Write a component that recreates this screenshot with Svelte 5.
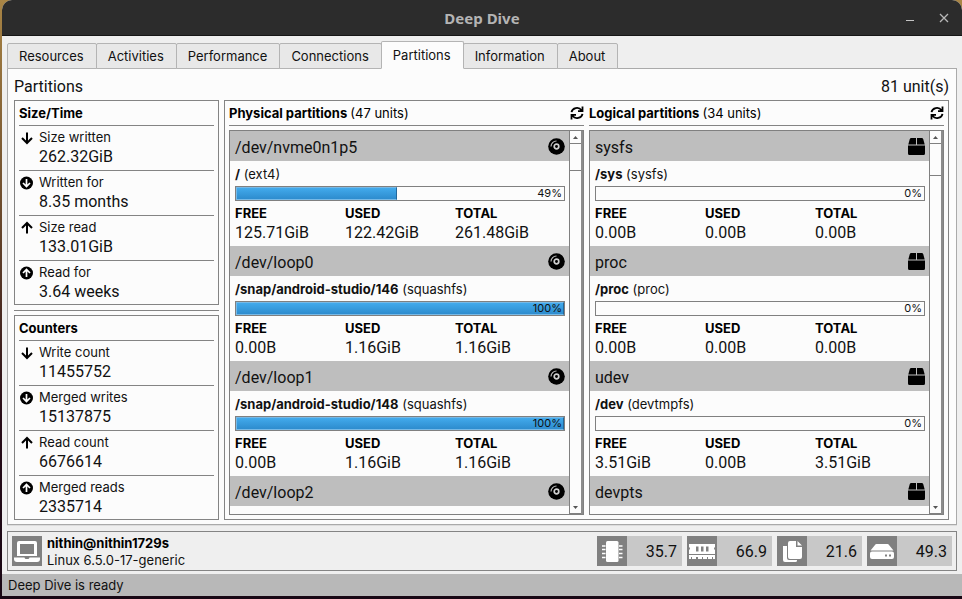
<script>
  const tabs = ['Resources', 'Activities', 'Performance', 'Connections', 'Partitions', 'Information', 'About'];
  let active = $state('Partitions');

  const groups = [
    {
      title: 'Size/Time',
      rows: [
        { icon: 'down', label: 'Size written', value: '262.32GiB' },
        { icon: 'downCircle', label: 'Written for', value: '8.35 months' },
        { icon: 'up', label: 'Size read', value: '133.01GiB' },
        { icon: 'upCircle', label: 'Read for', value: '3.64 weeks' }
      ]
    },
    {
      title: 'Counters',
      rows: [
        { icon: 'down', label: 'Write count', value: '11455752' },
        { icon: 'downCircle', label: 'Merged writes', value: '15137875' },
        { icon: 'up', label: 'Read count', value: '6676614' },
        { icon: 'upCircle', label: 'Merged reads', value: '2335714' }
      ]
    }
  ];

  const lists = [
    {
      title: 'Physical partitions',
      units: 47,
      kind: 'disc',
      thumb: 27,
      items: [
        { device: '/dev/nvme0n1p5', mount: '/', fs: 'ext4', percent: 49, free: '125.71GiB', used: '122.42GiB', total: '261.48GiB' },
        { device: '/dev/loop0', mount: '/snap/android-studio/146', fs: 'squashfs', percent: 100, free: '0.00B', used: '1.16GiB', total: '1.16GiB' },
        { device: '/dev/loop1', mount: '/snap/android-studio/148', fs: 'squashfs', percent: 100, free: '0.00B', used: '1.16GiB', total: '1.16GiB' },
        { device: '/dev/loop2' }
      ]
    },
    {
      title: 'Logical partitions',
      units: 34,
      kind: 'box',
      thumb: 32,
      items: [
        { device: 'sysfs', mount: '/sys', fs: 'sysfs', percent: 0, free: '0.00B', used: '0.00B', total: '0.00B' },
        { device: 'proc', mount: '/proc', fs: 'proc', percent: 0, free: '0.00B', used: '0.00B', total: '0.00B' },
        { device: 'udev', mount: '/dev', fs: 'devtmpfs', percent: 0, free: '3.51GiB', used: '0.00B', total: '3.51GiB' },
        { device: 'devpts' }
      ]
    }
  ];

  const meters = [
    { icon: 'chip', name: 'CPU', value: '35.7' },
    { icon: 'memory', name: 'Memory', value: '66.9' },
    { icon: 'pages', name: 'Swap', value: '21.6' },
    { icon: 'drive', name: 'Disk', value: '49.3' }
  ];

  let viewports = $state([]);
  const scroll = (index, amount) => viewports[index]?.scrollBy({ top: amount });
</script>

{#snippet rowIcon(name)}
  <svg class="row-icon" width="16" height="16" viewBox="0 0 16 16" aria-hidden="true">
    {#if name === 'down'}
      <path d="M8 2.5v10M3 8l5 5 5-5" fill="none" stroke="#000" stroke-width="2" />
    {:else if name === 'up'}
      <path d="M8 13.5v-10M3 8l5-5 5 5" fill="none" stroke="#000" stroke-width="2" />
    {:else}
      <circle cx="7.5" cy="8" r="6.5" />
      {#if name === 'downCircle'}
        <path d="M7.5 4v7M4 8l3.500 3.500L11 8" fill="none" stroke="#fff" stroke-width="1.700" />
      {:else}
        <path d="M7.5 12V5M4 8l3.500-3.500L11 8" fill="none" stroke="#fff" stroke-width="1.700" />
      {/if}
    {/if}
  </svg>
{/snippet}

{#snippet deviceIcon(kind)}
  <svg width="17" height="17" viewBox="0 0 17 17" aria-hidden="true">
    {#if kind === 'disc'}
      <circle cx="8.5" cy="8.5" r="8.3" />
      <circle cx="8.5" cy="8.5" r="2.3" fill="none" stroke="#d0d0d0" stroke-width="1.700" />
      <path d="M3 8.500A5.500 5.500 0 0 1 8.500 3" fill="none" stroke="#bebebe" stroke-width="1.200" />
    {:else}
      <path d="M3.200 0H8v6.500H0.300L1.800 1Q2.200 0 3.200 0zM9 0h4.800q1 0 1.400 1l1.500 5.500H9zM0 7.500h17v8q0 1.500-1.500 1.500h-14Q0 17 0 15.500z" />
    {/if}
  </svg>
{/snippet}

{#snippet tileIcon(name)}
  <svg width="30" height="30" viewBox="0 0 30 30" fill="#fff" aria-hidden="true">
    {#if name === 'laptop'}
      <path fill-rule="evenodd" d="M7 5h16q2 0 2 2v13H5V7q0-2 2-2zM8 8v10h14V8z" />
      <path d="M2 21.500h10.500q.3 1.500 1.500 1.500h2q1.200 0 1.500-1.500H28V23q0 3-3 3H5q-3 0-3-3z" />
    {:else if name === 'chip'}
      <rect x="9" y="5" width="12.500" height="21" rx="1.500" />
      <path d="M5 10h3.500M5 13.500h3.500M5 17.500h3.500M5 21.500h3.500M22 10h3.500M22 13.500h3.500M22 17.500h3.500M22 21.500h3.500" stroke="#fff" stroke-width="1.500" />
    {:else if name === 'memory'}
      <path fill-rule="evenodd" d="M2 8h26v3q-2 1.500 0 3v4H2v-4q2-1.500 0-3zM9 10.500v5h2.500v-5zM14 10.500v5h2.500v-5zM19 10.500v5h2.500v-5z" />
      <path d="M2 19h26v4h-2v-2h-1v2h-4v-2h-1v2h-4v-2h-1v2h-4v-2H9v2H5v-2H4v2H2z" />
    {:else if name === 'pages'}
      <path d="M13 5h6v6h6v10q0 2-2 2H13q-2 0-2-2V7q0-2 2-2zM20.500 5L25 9.500h-4.500z" />
      <path d="M6 10h4v12q0 2 2 2h8v0.500q0 1.500-1.500 1.500H8q-2 0-2-2z" />
    {:else}
      <path d="M9.500 8h11q1 0 1.500 1l4.500 5.500h-23L8 9q.5-1 1.500-1z" />
      <path fill-rule="evenodd" d="M5 15.500h20q2 0 2 2V21q0 2-2 2H5q-2 0-2-2v-3.500q0-2 2-2zM18 18.500v2h2v-2zM22 18.500v2h2v-2z" />
    {/if}
  </svg>
{/snippet}

<div class="desktop">
  <div class="window">
    <header class="titlebar">
      <h1>Deep Dive</h1>
      <div class="controls">
        <button aria-label="Minimize">
          <svg width="10" height="10" viewBox="0 0 10 10"><path d="M1 7.500h8" stroke="#c4c4c4" /></svg>
        </button>
        <button aria-label="Close">
          <svg width="10" height="10" viewBox="0 0 10 10"><path d="M1 1l8 8M9 1l-8 8" stroke="#b8b8b8" stroke-width="1.300" /></svg>
        </button>
      </div>
    </header>

    <main>
      <div class="tabs" role="tablist">
        {#each tabs as tab}
          <button role="tab" aria-selected={active === tab} class:active={active === tab} onclick={() => (active = tab)}>{tab}</button>
        {/each}
      </div>

      <section class="pane">
        <div class="heading">
          <h2>Partitions</h2>
          <span>81 unit(s)</span>
        </div>

        <div class="columns">
          <aside>
            {#each groups as group, i}
              {#if i > 0}<hr />{/if}
              <section class="group">
                <h3>{group.title}</h3>
                {#each group.rows as row}
                  <div class="stat">
                    {@render rowIcon(row.icon)}
                    <div>
                      <div class="label">{row.label}</div>
                      <div class="value">{row.value}</div>
                    </div>
                  </div>
                {/each}
              </section>
            {/each}
          </aside>

          <div class="panel">
            {#each lists as list, i}
              <section class="list">
                <div class="list-head">
                  <h3>{list.title} <span>({list.units} units)</span></h3>
                  <button aria-label="Refresh {list.title}">
                    <svg width="14" height="14" viewBox="0 0 14 14" fill="none" stroke="#000" stroke-width="1.800">
                      <path d="M1.500 6.200A5.500 5 0 0 1 11.500 4.200M12.500 0.500v4.600H8M12.500 7.800A5.500 5 0 0 1 2.500 9.800M1.500 13.500V8.900H6" />
                    </svg>
                  </button>
                </div>
                <div class="frame">
                  <div class="viewport" bind:this={viewports[i]}>
                    {#each list.items as item}
                      <article>
                        <div class="device">
                          <h4>{item.device}</h4>
                          {@render deviceIcon(list.kind)}
                        </div>
                        {#if item.mount}
                          <div class="details">
                            <div class="mount"><b>{item.mount}</b> ({item.fs})</div>
                            <div class="bar" role="progressbar" aria-label="Used" aria-valuenow={item.percent} aria-valuemin="0" aria-valuemax="100">
                              <div class="fill" class:empty={item.percent === 0} style:width="{item.percent}%"></div>
                              <span>{item.percent}%</span>
                            </div>
                            <dl>
                              <div><dt>FREE</dt><dd>{item.free}</dd></div>
                              <div><dt>USED</dt><dd>{item.used}</dd></div>
                              <div><dt>TOTAL</dt><dd>{item.total}</dd></div>
                            </dl>
                          </div>
                        {/if}
                      </article>
                    {/each}
                  </div>
                  <div class="scrollbar">
                    <button aria-label="Scroll up" onclick={() => scroll(i, -40)}>
                      <svg width="5" height="3" viewBox="0 0 5 3"><path d="M0 3L2.500 0 5 3z" fill="#555" /></svg>
                    </button>
                    <div class="thumb" style:height="{list.thumb}px"></div>
                    <div class="track"></div>
                    <button aria-label="Scroll down" onclick={() => scroll(i, 40)}>
                      <svg width="5" height="3" viewBox="0 0 5 3"><path d="M0 0h5L2.500 3z" fill="#555" /></svg>
                    </button>
                  </div>
                </div>
              </section>
            {/each}
          </div>
        </div>
      </section>

      <footer>
        <div class="tile">{@render tileIcon('laptop')}</div>
        <div class="host">
          <b>nithin@nithin1729s</b>
          <div>Linux 6.5.0-17-generic</div>
        </div>
        <div class="meters">
          {#each meters as meter}
            <div class="meter" title={meter.name}>
              <div class="tile">{@render tileIcon(meter.icon)}</div>
              <span>{meter.value}</span>
            </div>
          {/each}
        </div>
      </footer>
    </main>
    <div class="status">Deep Dive is ready</div>
  </div>
</div>

<style>
  :global(body) {
    margin: 0;
    overflow: hidden;
  }
  .desktop {
    box-sizing: border-box;
    height: 100vh;
    padding: 0 0 3px 2px;
    background: linear-gradient(#a98545, #6b4a2c 35%, #260a16 70%, #180714);
    font: 13px/19px Inter, sans-serif;
    color: #111;
  }
  .window {
    display: flex;
    flex-direction: column;
    height: 100%;
    background: #efefef;
    border-radius: 10px 10px 0 0;
    overflow: hidden;
  }
  h1, h2, h3, h4, dl, dd, hr {
    margin: 0;
  }
  button {
    font: inherit;
    color: inherit;
    padding: 0;
    border: 0;
    background: none;
  }
  svg {
    display: block;
    flex: none;
  }

  .titlebar {
    display: grid;
    grid-template-columns: 1fr auto 1fr;
    align-items: center;
    flex: none;
    height: 35px;
    background: #2c2c2c;
    border-bottom: 1px solid #161616;
  }
  h1 {
    grid-column: 2;
    font: bold 15px/20px "Noto Sans", sans-serif;
    color: #b4b4b4;
  }
  .controls {
    display: flex;
    justify-content: flex-end;
    gap: 24px;
    padding-right: 13px;
  }

  main {
    flex: 1;
    min-height: 0;
    display: flex;
    flex-direction: column;
    padding: 5px 5px 3px;
  }
  .tabs {
    display: flex;
    align-items: flex-end;
    position: relative;
    z-index: 1;
    margin-bottom: -1px;
  }
  .tabs button {
    box-sizing: border-box;
    height: 26px;
    padding: 0 12px 0 11px;
    margin-right: -1px;
    background: #e8e8e8;
    border: 1px solid #b4b4b4;
    border-radius: 2px 2px 0 0;
  }
  .tabs button.active {
    height: 28px;
    background: #fcfcfc;
    border-bottom-color: #fcfcfc;
    z-index: 1;
  }

  .pane {
    flex: 1;
    min-height: 0;
    display: flex;
    flex-direction: column;
    padding: 0 7px 4px 6px;
    background: #fcfcfc;
    border: 1px solid #aaa;
    box-shadow: 0 1px #ddd;
  }
  .heading {
    display: flex;
    justify-content: space-between;
    padding-top: 3px;
    height: 28px;
  }
  .heading, h2, h4, .value, dd, .meter {
    font: 16px/19px Roboto, sans-serif;
  }
  .heading, .heading h2 {
    line-height: 29px;
  }
  .columns {
    flex: 1;
    min-height: 0;
    display: flex;
    gap: 5px;
  }
  aside {
    width: 205px;
    flex: none;
    display: flex;
    flex-direction: column;
  }
  hr {
    height: 1px;
    border: 0;
    margin: 5px 0 4px;
    background: #848484;
  }
  .group {
    flex: 1;
    min-height: 0;
    box-sizing: border-box;
    padding: 0 4px;
    border: 1px solid #848484;
  }
  h3 {
    font-size: 13px;
    line-height: 24px;
    color: #000;
  }
  .stat {
    display: flex;
    gap: 4px;
    box-sizing: border-box;
    height: 45px;
    padding-top: 2px;
    border-top: 1px solid #848484;
  }
  .stat:last-child {
    height: 44px;
  }
  .row-icon {
    margin-top: 2px;
  }

  .panel {
    flex: 1;
    min-width: 0;
    display: flex;
    gap: 5px;
    padding: 0 4px 4px;
    border: 1px solid #848484;
  }
  .list {
    flex: 1;
    min-width: 0;
    display: flex;
    flex-direction: column;
  }
  .list-head {
    display: flex;
    align-items: center;
    justify-content: space-between;
    margin-bottom: 4px;
    border-bottom: 1px solid #848484;
  }
  h3 span {
    font-weight: 400;
  }
  .frame {
    flex: 1;
    min-height: 0;
    display: flex;
    border: 1px solid #808080;
  }
  .viewport {
    flex: 1;
    min-width: 0;
    overflow: hidden;
  }
  .device {
    display: flex;
    align-items: center;
    justify-content: space-between;
    height: 30px;
    padding: 0 4px 0 5px;
    background: #bebebe;
  }
  h4 {
    padding-top: 2px;
  }
  .details {
    padding: 3px 4px 4px 5px;
  }
  .mount {
    line-height: 20px;
  }
  .bar {
    position: relative;
    box-sizing: border-box;
    height: 15px;
    margin: 2px 0 3px;
    border: 1px solid #808080;
  }
  .fill {
    box-sizing: border-box;
    height: 100%;
    background: linear-gradient(#42aaec, #2d8cce);
    border: 1px solid #77b9e6;
    border-right-color: #23689b;
  }
  .fill.empty {
    border-width: 0;
  }
  .bar span {
    position: absolute;
    right: 2px;
    top: 0;
    font-size: 11px;
    line-height: 13px;
  }
  dl {
    display: grid;
    grid-template-columns: repeat(3, 1fr);
  }
  dt {
    font-weight: 700;
    color: #000;
  }
  .scrollbar {
    width: 11px;
    flex: none;
    display: flex;
    flex-direction: column;
    border-left: 1px solid #808080;
    border-right: 2px solid #8c8c8c;
  }
  .scrollbar button {
    height: 13px;
    display: grid;
    place-items: center;
    border-bottom: 1px solid #808080;
  }
  .thumb {
    box-sizing: border-box;
    border-bottom: 1px solid #808080;
  }
  .track {
    flex: 1;
  }

  footer {
    flex: none;
    display: flex;
    gap: 5px;
    margin-top: 6px;
    padding: 4px;
    border: 1px solid #848484;
  }
  .tile {
    width: 30px;
    height: 30px;
    background: #808080;
  }
  .host {
    flex: 1;
    line-height: 17px;
    margin: -1px 0 -3px;
  }
  .host b {
    color: #000;
  }
  .meters {
    display: flex;
    gap: 5px;
  }
  .meter {
    display: flex;
    width: 85px;
    background: #c8c8c8;
  }
  .meter span {
    flex: 1;
    padding-right: 5px;
    text-align: right;
    line-height: 32px;
    height: 30px;
  }
  .status {
    flex: none;
    padding: 0 6px;
    line-height: 22px;
    background: #b8b8b8;
  }
</style>
